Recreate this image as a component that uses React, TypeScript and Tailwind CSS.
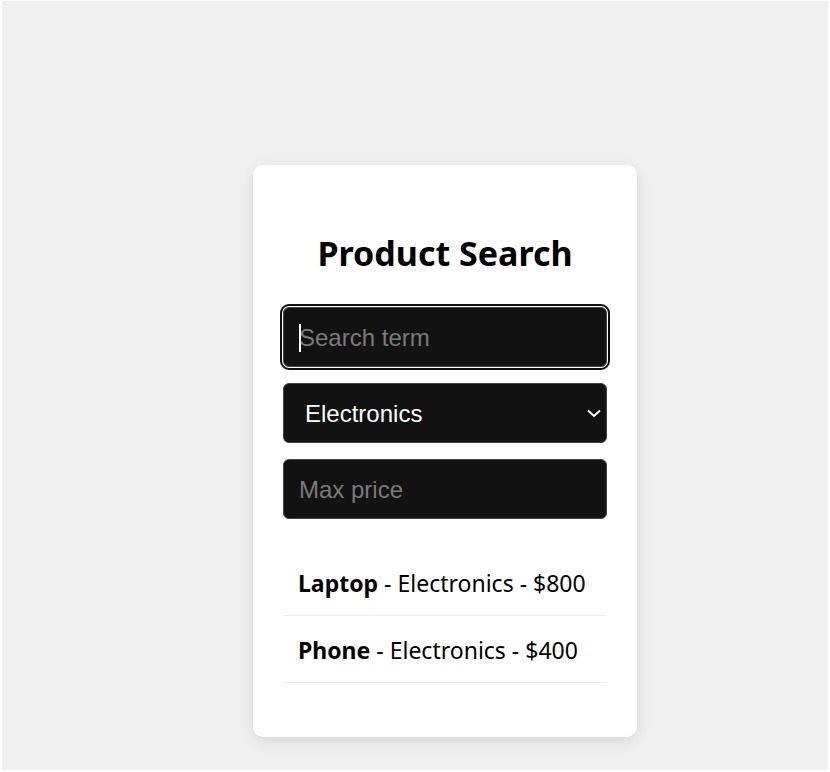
const products = [
  { name: 'Laptop', category: 'Electronics', price: 800 },
  { name: 'Phone', category: 'Electronics', price: 400 },
];

export default function App() {
  return (
    <div className="min-h-[772px] w-full bg-white p-[2px] pt-[1px]">
      <div className="flex h-[769px] items-start justify-center bg-[#f0f0f0] pt-[164px] pl-[60px]">
        <div className="w-[384px] rounded-[10px] bg-white px-[30px] pt-[30px] pb-[54px] shadow-[0_4px_14px_rgba(0,0,0,0.1)]">
          <h1 className="mt-[39px] mb-[35px] text-center text-[34px] leading-[38px] font-bold text-black [font-family:'Noto_Sans',sans-serif]">
            Product Search
          </h1>

          <div className="flex flex-col gap-[16px] [font-family:'Liberation_Sans',Arial,sans-serif]">
            <div className="relative">
              <input
                type="text"
                placeholder="Search term"
                className="h-[60px] w-full rounded-[6px] border border-[#444] bg-[#121212] px-[15px] pt-[2px] text-[24px] text-white outline-2 outline-offset-[1px] outline-[#101010] outline-solid placeholder:text-[#7a7a7a]"
              />
              <span className="pointer-events-none absolute top-[17px] left-[16px] h-[28px] w-[2px] bg-white" />
            </div>
            <div className="relative">
              <select
                defaultValue="Electronics"
                className="h-[60px] w-full appearance-none rounded-[6px] border border-[#444] bg-[#121212] pt-[2px] pl-[21px] text-[24px] text-white"
              >
                <option>All</option>
                <option>Electronics</option>
                <option>Clothing</option>
              </select>
              <svg
                className="pointer-events-none absolute top-[26px] right-[5px] h-[9px] w-[16px]"
                viewBox="0 0 16 9"
                fill="none"
                stroke="white"
                strokeWidth="2"
              >
                <path d="M2 1.5 L8 7 L14 1.5" />
              </svg>
            </div>
            <input
              type="number"
              placeholder="Max price"
              className="h-[60px] w-full rounded-[6px] border border-[#444] bg-[#121212] px-[15px] pt-[1px] text-[24px] text-white placeholder:text-[#7a7a7a]"
            />
          </div>

          <ul className="mt-[30px] [font-family:'Noto_Sans',sans-serif]">
            {products.map((p) => (
              <li key={p.name} className="flex h-[67px] items-center border-b border-[#eeeeee] px-[15px] pt-[2px] text-[23px] text-black">
                <span>
                  <strong className="font-bold">{p.name}</strong> - {p.category} - ${p.price}
                </span>
              </li>
            ))}
          </ul>
        </div>
      </div>
    </div>
  );
}
